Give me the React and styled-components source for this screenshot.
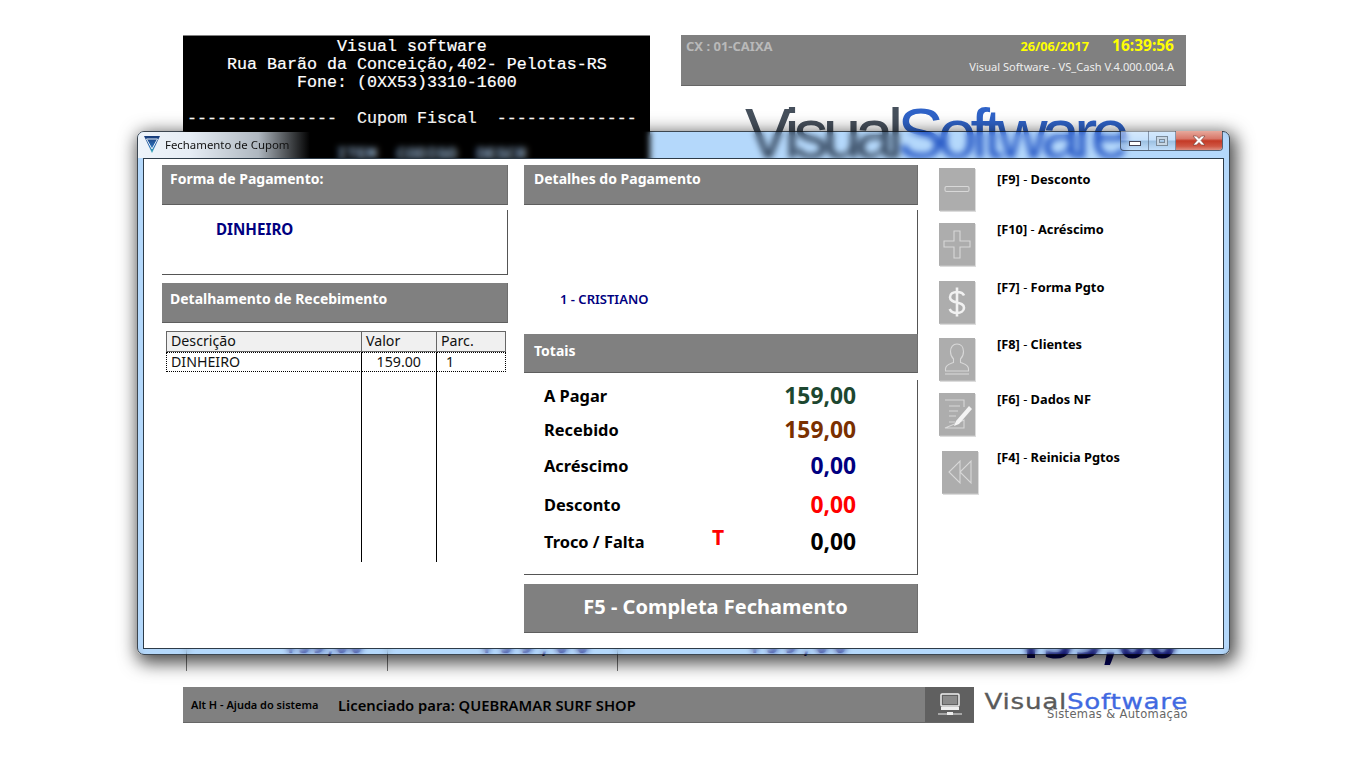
import React from "react";
import styled, { createGlobalStyle } from "styled-components";

const ui = `"Noto Sans", "Open Sans", sans-serif`;

const GlobalStyle = createGlobalStyle`
  html, body {
    margin: 0;
    background: #fff;
    font-family: ${ui};
  }
  * { box-sizing: border-box; }
`;

const Page = styled.div`
  position: relative;
  width: 1366px;
  height: 768px;
  padding: 35px 0 0 183px;
  overflow: hidden;
  background: #fff;
`;

/* ---- tela de fundo ---- */

const TopRow = styled.div`
  display: grid;
  grid-template-columns: 467px 505px;
  column-gap: 31px;
  height: 565px;
`;

const Receipt = styled.pre`
  margin: 0;
  height: 420px;
  padding: 2px 0 0 4px;
  background: #000;
  border-top: 1px solid #808080;
  color: #fff;
  font: 16.67px/18px "Liberation Mono", monospace;
  -webkit-text-stroke: 0.2px #fff;
`;

const StatusPanel = styled.div`
  display: flex;
  justify-content: space-between;
  height: 51px;
  padding: 0 12px 0 5px;
  background: #808080;
  border-bottom: 1px solid #666;
`;

const CashLabel = styled.div`
  margin-top: 3px;
  color: #b9b9b9;
  font-size: 13px;
  font-weight: 700;
  line-height: 17px;
`;

const StatusRight = styled.div`
  display: flex;
  flex-direction: column;
  align-items: flex-end;
`;

const DateTime = styled.div`
  display: flex;
  align-items: baseline;
  gap: 23px;
  color: #ffff00;
  font-size: 12.7px;
  font-weight: 700;
  line-height: 20px;
`;

const Clock = styled.span`
  font-size: 15.5px;
`;

const Version = styled.div`
  margin-top: 3px;
  color: #eee;
  font-size: 11.1px;
  line-height: 16px;
`;

const BigLogo = styled.div`
  margin: 17px 0 0 64px;
  color: #46505c;
  font: 400 70px/62px "Liberation Sans", sans-serif;
  letter-spacing: -6.2px;
  white-space: nowrap;
`;

const Blue = styled.span`
  color: #2f63c8;
`;

const SalesStrip = styled.div`
  display: flex;
  align-items: flex-end;
  width: 994px;
  height: 71px;
`;

const SalesCell = styled.div`
  width: ${(p) => p.$w}px;
  height: 100%;
  margin-left: ${(p) => p.$ml || 0}px;
  padding: 32px ${(p) => p.$pr}px 0 0;
  border-left: 1px solid #777;
  color: #1a1a7a;
  font-size: 20px;
  font-weight: 700;
  letter-spacing: ${(p) => p.$ls}px;
  text-align: right;
`;

const GrandTotal = styled.div`
  margin-left: auto;
  color: #000060;
  font-size: 52px;
  font-weight: 700;
  line-height: 50px;
  margin-bottom: 8px;
`;

const Footer = styled.div`
  display: flex;
  margin-top: 16px;
`;

const FooterBar = styled.div`
  display: flex;
  align-items: center;
  width: 791px;
  height: 36px;
  padding-left: 8px;
  background: #808080;
  border-bottom: 1px solid #666;
  color: #000;
`;

const HelpText = styled.span`
  width: 147px;
  font-size: 11px;
  font-weight: 600;
`;

const License = styled.span`
  font-size: 14.75px;
  font-weight: 600;
`;

const FooterIcon = styled.div`
  display: flex;
  align-items: center;
  justify-content: center;
  width: 49px;
  height: 100%;
  margin-left: auto;
  background: #606060;
`;

const SmallLogo = styled.div`
  display: flex;
  flex-direction: column;
  align-items: flex-end;
  width: 203px;
  margin-left: 11px;
  padding-top: 7px;
`;

const SmallWord = styled.div`
  color: #5a5a5a;
  font: 400 22px/16px "DejaVu Sans", sans-serif;
  letter-spacing: 0.6px;
  white-space: nowrap;
  transform: scaleX(1.19);
  transform-origin: right center;
  -webkit-text-stroke: 0.3px currentColor;
`;

const SmallBlue = styled.span`
  color: #4169e1;
`;

const SmallTag = styled.div`
  margin-top: -1px;
  color: #666;
  font: 400 11.5px/10px "DejaVu Sans", sans-serif;
  letter-spacing: 0.35px;
  white-space: nowrap;
`;

/* ---- janela ---- */

const Window = styled.div`
  position: absolute;
  left: 137px;
  top: 131px;
  width: 1093px;
  height: 524px;
  border-radius: 7px;
  box-shadow: 3px 5px 18px 3px rgba(0, 0, 0, 0.72);
`;

const Glass = styled.div`
  position: absolute;
  inset: 0;
  border-radius: 7px;
  backdrop-filter: blur(3px);
`;

const Tint = styled.div`
  position: absolute;
  inset: 0;
  border-radius: 7px;
  background: #b4d8fb;
  border: 1px solid #3c4650;
  mix-blend-mode: multiply;
`;

const TitleBar = styled.div`
  position: relative;
  display: flex;
  align-items: flex-start;
  height: 27px;
  padding: 0 7px 0 7px;
`;

const TitleGlow = styled.div`
  position: absolute;
  left: 1px;
  top: 1px;
  width: 172px;
  height: 26px;
  border-radius: 6px 0 0 0;
  background: linear-gradient(90deg, #eef4fa 0, #e6edf5 30%, rgba(205, 215, 225, 0.85) 70%, rgba(190, 200, 210, 0) 100%);
`;

const TitleIcon = styled.svg`
  position: relative;
  width: 16px;
  height: 17px;
  margin-top: 5px;
`;

const TitleText = styled.div`
  position: relative;
  margin: 5px 0 0 5px;
  color: #111;
  font-size: 11.4px;
  line-height: 17px;
`;

const WindowButtons = styled.div`
  position: relative;
  display: flex;
  height: 20px;
  margin-left: auto;
  border: 1px solid rgba(50, 60, 75, 0.75);
  border-top: 0;
  border-radius: 0 0 4px 4px;
  overflow: hidden;
`;

const WindowButton = styled.div`
  display: flex;
  align-items: center;
  justify-content: center;
  width: ${(p) => p.$w}px;
  background: ${(p) =>
    p.$close
      ? "linear-gradient(#e7a99c, #d8786a 40%, #c43a26 52%, #cf5643 80%, #dd8e80)"
      : "linear-gradient(rgba(255,255,255,.45), rgba(255,255,255,.25) 45%, rgba(60,90,120,.18) 55%, rgba(255,255,255,.2))"};
  border-right: ${(p) => (p.$close ? "0" : "1px solid rgba(60,70,90,.5)")};
`;

const MinGlyph = styled.div`
  width: 12px;
  height: 5px;
  margin-top: 5px;
  background: #fff;
  border: 1px solid #445;
`;

const MaxGlyph = styled.div`
  width: 12px;
  height: 10px;
  border: 1px solid #7b8a99;
  box-shadow: inset 0 0 0 2px #c7d6e4, inset 0 0 0 3px #7b8a99;
`;

const Client = styled.div`
  position: relative;
  display: grid;
  grid-template-columns: 346px 394px 1fr;
  column-gap: 16px;
  align-items: start;
  width: 1081px;
  height: 491px;
  margin-left: 6px;
  padding: 6px 0 0 18px;
  background: #fff;
  border: 1px solid #2d3b48;
`;

const Column = styled.div`
  display: flex;
  flex-direction: column;
`;

const ActionColumn = styled(Column)`
  margin-left: 5px;
`;

const SectionHeader = styled.div`
  height: ${(p) => p.$h || 40}px;
  margin-top: ${(p) => p.$mt || 0}px;
  padding: ${(p) => p.$pt || 4}px 0 0 ${(p) => p.$pl}px;
  background: #808080;
  border-bottom: 1px solid #5e5e5e;
  border-right: 1px solid #6e6e6e;
  color: #fff;
  font-size: 14px;
  font-weight: 700;
  line-height: 20px;
`;

const Box = styled.div`
  position: relative;
  height: ${(p) => p.$h}px;
  margin-top: ${(p) => p.$mt}px;
  border-right: 1px solid #555;
  border-bottom: ${(p) => (p.$open ? "0" : "1px solid #555")};
`;

const PayMethod = styled.div`
  padding: 9px 0 0 54px;
  color: #000080;
  font-size: 15.2px;
  font-weight: 700;
  line-height: 20px;
`;

const ClientName = styled.div`
  padding: 81px 0 0 36px;
  color: #000080;
  font-size: 13px;
  font-weight: 600;
  line-height: 16px;
`;

const ListGrid = styled.div`
  display: grid;
  grid-template-columns: 196px 75px 69px;
  width: 340px;
  margin: 8px 0 0 4px;
  color: #111;
  font-size: 14.2px;
  line-height: 18px;
`;

const ListHead = styled.div`
  height: 21px;
  padding-left: ${(p) => p.$pl || 4}px;
  background: #f0f0f0;
  border: 1px solid #666;
  border-left: ${(p) => (p.$first ? "1px solid #666" : "0")};
`;

const ListCell = styled.div`
  height: 20px;
  padding: 0 ${(p) => p.$pr || 0}px 0 ${(p) => p.$pl || 0}px;
  text-align: ${(p) => p.$align || "left"};
  border-top: 1px dotted #000;
  border-bottom: 1px dotted #000;
  border-left: ${(p) => (p.$first ? "1px dotted #000" : "0")};
  border-right: ${(p) => (p.$last ? "1px dotted #000" : "1px solid #000")};
`;

const ListTail = styled.div`
  height: 190px;
  border-right: ${(p) => (p.$line ? "1px solid #000" : "0")};
`;

const TotalRow = styled.div`
  display: flex;
  align-items: center;
  height: ${(p) => p.$h}px;
  padding: 0 61px 3px 20px;
`;

const TotalLabel = styled.span`
  width: 168px;
  color: #000;
  font-size: 16.4px;
  font-weight: 700;
`;

const TrocoFlag = styled.span`
  margin-bottom: 9px;
  color: #f00;
  font-size: 21px;
  font-weight: 700;
  line-height: 22px;
`;

const TotalValue = styled.span`
  margin-left: auto;
  color: ${(p) => p.$color};
  font-size: 22.8px;
  font-weight: 700;
`;

const CompleteButton = styled.div`
  display: flex;
  align-items: center;
  justify-content: center;
  height: 49px;
  margin-top: 9px;
  padding: 0 10px 4px 0;
  background: #808080;
  border-bottom: 1px solid #5e5e5e;
  border-right: 1px solid #6e6e6e;
  color: #fff;
  font-size: 20px;
  font-weight: 700;
`;

const ActionRow = styled.div`
  display: flex;
  align-items: flex-start;
  margin-top: ${(p) => p.$mt}px;
`;

const ActionSlot = styled.div`
  width: 58px;
  padding-left: ${(p) => p.$shift || 0}px;
`;

const ActionButton = styled.div`
  display: flex;
  align-items: center;
  justify-content: center;
  width: 36px;
  height: 43px;
  background: #adadad;
  border-bottom: 1px solid #bcbcbc;
  box-shadow: 1px 1px 0 #dcdcdc;
`;

const ActionLabel = styled.div`
  margin-top: ${(p) => p.$off}px;
  color: #000;
  font-size: 12.8px;
  line-height: 16px;
`;

const ActionKey = styled.span`
  font-weight: 700;
`;

const ActionName = styled.span`
  font-weight: 700;
`;

const strokes = {
  fill: "none",
  stroke: "#d8d8d8",
  strokeWidth: 1.1,
};

const icons = {
  minus: (
    <svg width="30" height="30" viewBox="0 0 30 30">
      <rect x="3" y="12.500" width="24" height="5" rx="1.500" {...strokes} />
    </svg>
  ),
  plus: (
    <svg width="30" height="36" viewBox="0 0 30 36">
      <path d="M12 5h6v10h10v6H18v11h-6V21H2v-6h10z" {...strokes} />
    </svg>
  ),
  dollar: (
    <svg width="24" height="34" viewBox="0 0 24 34">
      <path
        d="M19 10.500c-1-2.500-3.500-3.500-7-3.500-4 0-7 2-7 5.200 0 7 14 3.600 14 10.500 0 3.200-3 5.300-7 5.300-3.800 0-6.200-1.300-7.300-4M12 2.500v29"
        fill="none"
        stroke="#f1f1f1"
        strokeWidth="2.6"
      />
    </svg>
  ),
  user: (
    <svg width="30" height="36" viewBox="0 0 30 36">
      <path d="M15 3c-4 0-6.500 3-6.500 7.500 0 3.500 1.500 6 3 7.500v3.500C8 23 3.500 23.500 3.500 28v2h23v-2c0-4.500-4.500-5-8-6.500V18c1.500-1.500 3-4 3-7.500C21.500 6 19 3 15 3z" {...strokes} />
      <path d="M3 33h24" {...strokes} />
    </svg>
  ),
  note: (
    <svg width="32" height="36" viewBox="0 0 32 36">
      <path d="M4 4h19v7M23 24v8H4z" {...strokes} />
      <path d="M8 10h11M8 15h9M8 20h7M8 26h6" {...strokes} />
      <path d="M28 10l3 3-13 15-5 2 2-5z" fill="#f4f4f4" />
    </svg>
  ),
  back: (
    <svg width="26" height="32" viewBox="0 0 26 32">
      <path d="M13 5v22L2 16zM24 5v22L13 16z" {...strokes} />
    </svg>
  ),
};

const actions = [
  { id: "minus", key: "[F9]", name: "Desconto", mt: 3, off: 3 },
  { id: "plus", key: "[F10]", name: "Acréscimo", mt: 12, off: -2 },
  { id: "dollar", key: "[F7]", name: "Forma Pgto", mt: 15, off: -2 },
  { id: "user", key: "[F8]", name: "Clientes", mt: 14, off: -2 },
  { id: "note", key: "[F6]", name: "Dados NF", mt: 12, off: -2 },
  { id: "back", key: "[F4]", name: "Reinicia Pgtos", mt: 15, off: -2, shift: 3 },
];

const totals = [
  { label: "A Pagar", value: "159,00", color: "#1d4730", h: 33 },
  { label: "Recebido", value: "159,00", color: "#7a3000", h: 36 },
  { label: "Acréscimo", value: "0,00", color: "#000080", h: 35 },
  { label: "Desconto", value: "0,00", color: "#ff0000", h: 44 },
  { label: "Troco / Falta", value: "0,00", color: "#000", h: 30, flag: true },
];

const receiptText = `               Visual software
    Rua Barão da Conceição,402- Pelotas-RS
           Fone: (0XX53)3310-1600

---------------  Cupom Fiscal  --------------

               ITEM  CODIGO  DESCR`;

export default function App() {
  return (
    <Page>
      <GlobalStyle />
      <TopRow>
        <Receipt>{receiptText}</Receipt>
        <div>
          <StatusPanel>
            <CashLabel>CX : 01-CAIXA</CashLabel>
            <StatusRight>
              <DateTime>
                <span>26/06/2017</span>
                <Clock>16:39:56</Clock>
              </DateTime>
              <Version>Visual Software - VS_Cash V.4.000.004.A</Version>
            </StatusRight>
          </StatusPanel>
          <BigLogo>
            Visual<Blue>Software</Blue>
          </BigLogo>
        </div>
      </TopRow>

      <SalesStrip>
        <SalesCell $w={201} $ml={3} $pr={22} $ls={3}>159,00</SalesCell>
        <SalesCell $w={230} $pr={20} $ls={9}>159,00</SalesCell>
        <SalesCell $w={240} $pr={4} $ls={7}>159,00</SalesCell>
        <GrandTotal>159,00</GrandTotal>
      </SalesStrip>

      <Footer>
        <FooterBar>
          <HelpText>Alt H - Ajuda do sistema</HelpText>
          <License>Licenciado para: QUEBRAMAR SURF SHOP</License>
          <FooterIcon>
            <svg width="26" height="24" viewBox="0 0 26 24">
              <rect x="4" y="1" width="18" height="12" rx="1" fill="none" stroke="#eee" strokeWidth="1.5" />
              <rect x="6" y="3" width="14" height="8" fill="#8a8a8a" />
              <rect x="4" y="14" width="18" height="3" fill="#eee" />
              <path d="M1 21h9M16 21h9" stroke="#eee" strokeWidth="1.2" />
              <rect x="10" y="19" width="6" height="3" fill="#eee" />
            </svg>
          </FooterIcon>
        </FooterBar>
        <SmallLogo>
          <SmallWord>
            Visual<SmallBlue>Software</SmallBlue>
          </SmallWord>
          <SmallTag>Sistemas &amp; Automação</SmallTag>
        </SmallLogo>
      </Footer>

      <Window>
        <Glass />
        <Tint />
        <TitleBar>
          <TitleGlow />
          <TitleIcon viewBox="0 0 16 17">
            <defs>
              <linearGradient id="vsIcon" x1="0" y1="0" x2="0" y2="1">
                <stop offset="0" stopColor="#173a78" />
                <stop offset="0.6" stopColor="#2a6cb5" />
                <stop offset="1" stopColor="#3fb3b8" />
              </linearGradient>
            </defs>
            <path d="M0 0h16L8 17z" fill="url(#vsIcon)" />
            <path d="M2.500 3h11L8 13z" fill="none" stroke="#e8f0f6" strokeWidth="1" />
          </TitleIcon>
          <TitleText>Fechamento de Cupom</TitleText>
          <WindowButtons>
            <WindowButton $w={28}><MinGlyph /></WindowButton>
            <WindowButton $w={27}><MaxGlyph /></WindowButton>
            <WindowButton $w={46} $close>
              <svg width="14" height="11" viewBox="0 0 14 11">
                <path d="M1 1h3.500L7 3.500 9.500 1H13L9 5.500l4 4.500H9.500L7 7.500 4.500 10H1l4-4.500z" fill="#fff" stroke="#6b3a34" strokeWidth="0.6" />
              </svg>
            </WindowButton>
          </WindowButtons>
        </TitleBar>

        <Client>
          <Column>
            <SectionHeader $pl={8}>Forma de Pagamento:</SectionHeader>
            <Box $h={65} $mt={5}>
              <PayMethod>DINHEIRO</PayMethod>
            </Box>
            <SectionHeader $pl={8} $mt={8} $pt={6}>Detalhamento de Recebimento</SectionHeader>
            <ListGrid>
              <ListHead $first>Descrição</ListHead>
              <ListHead>Valor</ListHead>
              <ListHead>Parc.</ListHead>
              <ListCell $first $pl={4}>DINHEIRO</ListCell>
              <ListCell $align="right" $pr={15}>159.00</ListCell>
              <ListCell $last $pl={9}>1</ListCell>
              <ListTail $line />
              <ListTail $line />
              <ListTail />
            </ListGrid>
          </Column>

          <Column>
            <SectionHeader $pl={10}>Detalhes do Pagamento</SectionHeader>
            <Box $h={124} $mt={5} $open>
              <ClientName>1 - CRISTIANO</ClientName>
            </Box>
            <SectionHeader $pl={10} $h={39} $pt={7}>Totais</SectionHeader>
            <Box $h={195} $mt={7}>
              {totals.map((t) => (
                <TotalRow key={t.label} $h={t.h}>
                  <TotalLabel>{t.label}</TotalLabel>
                  {t.flag && <TrocoFlag>T</TrocoFlag>}
                  <TotalValue $color={t.color}>{t.value}</TotalValue>
                </TotalRow>
              ))}
            </Box>
            <CompleteButton>F5 - Completa Fechamento</CompleteButton>
          </Column>

          <ActionColumn>
            {actions.map((a) => (
              <ActionRow key={a.id} $mt={a.mt}>
                <ActionSlot $shift={a.shift}>
                  <ActionButton>{icons[a.id]}</ActionButton>
                </ActionSlot>
                <ActionLabel $off={a.off}>
                  <ActionKey>{a.key}</ActionKey> - <ActionName>{a.name}</ActionName>
                </ActionLabel>
              </ActionRow>
            ))}
          </ActionColumn>
        </Client>
      </Window>
    </Page>
  );
}
